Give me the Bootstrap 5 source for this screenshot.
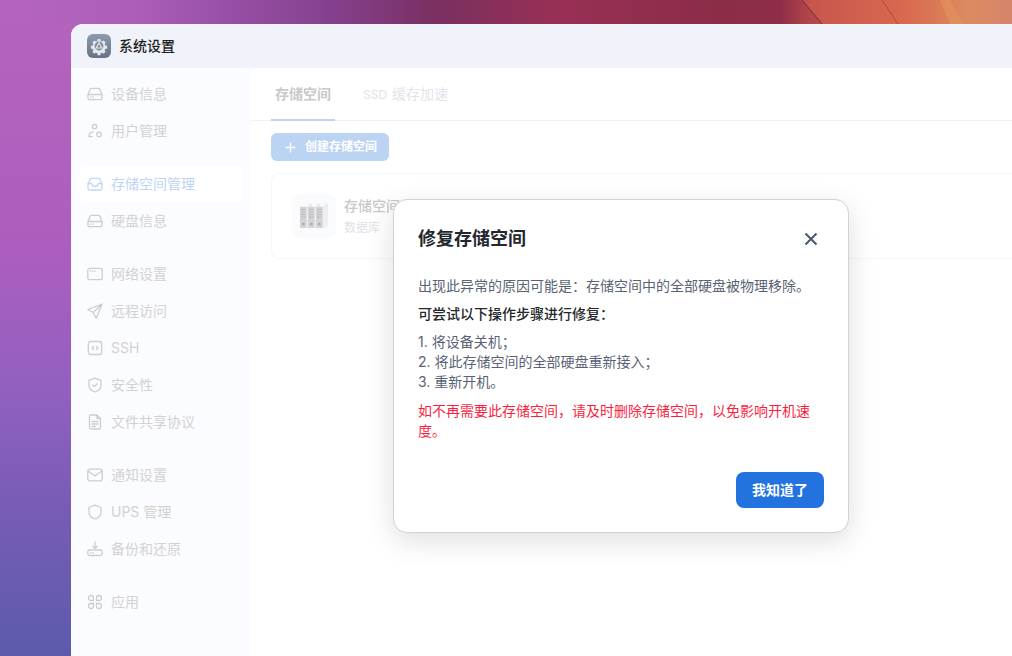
<!DOCTYPE html>
<html lang="zh-CN">
<head>
<meta charset="utf-8">
<title>系统设置</title>
<link href="https://cdn.jsdelivr.net/npm/bootstrap@5.3.0/dist/css/bootstrap.min.css" rel="stylesheet">
<style>
html,body{height:100%;overflow:hidden}
body{font-family:Inter,"Noto Sans CJK SC",sans-serif;font-size:14px;position:relative;
 background:
  linear-gradient(90deg,#b565bf 0,#ad5fb8 130px,#9a52aa 213px,#84408c 335px,#7a2f60 440px,#983055 555px,#8b2c47 723px,#8f2e47 780px,#c8564e 810px,#d8684e 903px,#dc8a60 968px,#d5866a 100%) top/100% 24px no-repeat,
  linear-gradient(180deg,#b564bd 0,#ac5ebf 250px,#9060bf 400px,#7a5cb5 500px,#5c5bab 656px)}
.wallpaper-streaks{position:absolute;left:770px;top:0;width:242px;height:24px;display:block}
.shell{position:absolute;left:71px;top:24px;width:941px;height:632px;border-top-left-radius:12px;overflow:hidden;background:#fbfcff;display:flex;flex-direction:column}
.titlebar{height:44px;background:#f0f3f9;gap:8px;padding-left:16px;flex:none}
.app-logo{width:24px;height:24px;display:block}
.app-name{font-weight:500;color:#1c1e22;line-height:20px}
.body-row{flex:1;min-height:0}
.side{width:180px;flex:none;padding:7px 8px 0;background:#fbfcff}
.side-group{margin-bottom:16px}
.side-group:first-child{margin-bottom:17px}
.side-item{height:37px;padding-left:7px;gap:7px;color:#d2d2d2;line-height:20px}
.side-item svg{width:18px;height:18px;flex:none;fill:none;stroke:#cdcdcd;stroke-width:1.3;stroke-linejoin:round;stroke-linecap:round}
.side-item.on{color:#bdd4f5;background:#fff;border-radius:8px;height:36px}
.side-item.on svg{stroke:#bfd6f6}
.pane{flex:1;background:#fff;border-top-left-radius:8px;min-width:0}
.tabbar{height:53px;border-bottom:1px solid #f0f0f0;padding-left:20px;gap:24px;align-items:stretch}
.tab-link{padding:0 4px;line-height:52px;color:#e0e3e9;height:53px}
.tab-link.on{color:#c9c9c9;font-weight:600;border-bottom:2px solid #bcd4f4}
.tab-latin{font-size:12px;margin-right:1px}
.pane-inner{padding:12px 0 0 20px}
.create-btn{height:28px;width:118px;background:#bcd4f4;border:0;border-radius:6px;color:#fff;font-size:12px;font-weight:700;gap:8px;padding:0 0 0 13px;line-height:28px}
.create-btn:disabled{background:#bcd4f4;color:#fff;opacity:1}
.create-btn svg{width:13px;height:13px;stroke:#fff;stroke-width:1.3;fill:none}
.space-card{margin-top:12px;height:86px;border:1px solid #f6f6f7;border-radius:8px 0 0 8px;border-right:0;padding:20px;gap:8px;flex-direction:row;align-items:flex-start}
.space-tile{width:44px;height:44px;background:#fafbfd;border-radius:8px;flex:none}
.space-tile svg{width:44px;height:44px;display:block}
.space-name{font-weight:500;color:#c9c9c9;line-height:24px}
.space-kind{font-size:12px;color:#dfe1e6;line-height:20px}
.dialog{position:absolute;left:393px;top:199px;width:456px;height:334px;background:#fff;border:1px solid #d2d2d2;border-radius:14px;box-shadow:0 8px 28px rgba(0,0,0,.13);padding:26px 24px 24px;z-index:5}
.dialog-title{font-size:18px;line-height:26px;font-weight:600;color:#24272c;margin:0}
.dialog-close{position:absolute;right:28px;top:31px;width:18px;height:16px;padding:0;border:0;background:none;display:block}
.dialog-close svg{display:block;width:18px;height:16px;stroke:#4b566b;stroke-width:2;fill:none}
.dialog-text{color:#5a6374;line-height:20px;margin:0}
.t1{margin-top:24px}
.t2{margin-top:8px;color:#24272c;font-weight:500}
.t3{margin-top:8px}
.t4{margin-top:9px;color:#fb1f3f}
.ok-btn{width:88px;height:36px;background:#2272e0;border:0;border-radius:8px;color:#fff;font-weight:700;font-size:14px;line-height:36px;padding:0;margin-top:31px}
.ok-btn:hover{background:#2272e0;color:#fff}
</style>
</head>
<body>
<svg class="wallpaper-streaks" viewBox="0 0 242 24" aria-hidden="true"><path d="M0 0h32l20 24H0z" fill="#8b2c47" opacity=".35"/><path d="M32 0l20 24" stroke="#7e2b35" stroke-width="1" fill="none"/><path d="M112 0l16 24" stroke="#b0483a" stroke-width="1" fill="none"/><path d="M180 0l14 24h-14l-10-24z" fill="#e3955c" opacity=".55"/></svg>
<div class="shell">
  <div class="titlebar d-flex align-items-center">
    <svg class="app-logo" viewBox="0 0 24 24"><defs><linearGradient id="lg" x1="0" y1="0" x2="0" y2="1"><stop offset="0" stop-color="#8c9cb0"/><stop offset="1" stop-color="#667283"/></linearGradient></defs><rect width="24" height="24" rx="6" fill="url(#lg)"/><path d="M10.4 4h3.2l.4 2.2 1.500.7 1.900-1.200 2.200 2.200-1.200 1.900.7 1.500 2.200.4v3.200l-2.200.4-.7 1.500 1.200 1.900-2.200 2.200-1.900-1.200-1.500.7-.4 2.200h-3.200l-.4-2.200-1.500-.7-1.900 1.200-2.200-2.200 1.200-1.900-.7-1.500-2.200-.4v-3.200l2.200-.4.7-1.500-1.200-1.900 2.200-2.200 1.900 1.200 1.500-.7z" fill="#e4e7ec" transform="translate(1.500 1.500) scale(.875)"/><circle cx="12" cy="12" r="4.400" fill="#7d8a99"/><path d="M12 8.800l2.800 5.200H9.200z" fill="none" stroke="#e4e7ec" stroke-width="1.200"/></svg>
    <span class="app-name">系统设置</span>
  </div>
  <div class="body-row d-flex">
    <nav class="side">
      <div class="side-group">
        <div class="side-item d-flex align-items-center"><svg viewBox="0 0 18 18"><path d="M2 9.500 4.200 4.200a1.500 1.500 0 0 1 1.400-.9h6.800a1.500 1.500 0 0 1 1.400.9L16 9.500v3.700a1.500 1.500 0 0 1-1.500 1.500h-11A1.500 1.500 0 0 1 2 13.200zM2 9.500h14M4.500 12.100h.6M6.800 12.100h.6"/></svg><span>设备信息</span></div>
        <div class="side-item d-flex align-items-center"><svg viewBox="0 0 18 18"><circle cx="8.500" cy="4.500" r="2.200"/><path d="M3 14.500c0-2.300 1.500-4.200 4-4.700M2.800 14.700h3.400"/><circle cx="13" cy="12.500" r="2.300"/></svg><span>用户管理</span></div>
      </div>
      <div class="side-group">
        <div class="side-item on d-flex align-items-center"><svg viewBox="0 0 18 18"><path d="M2 9 4.200 4.200a1.500 1.500 0 0 1 1.400-.9h6.800a1.500 1.500 0 0 1 1.400.9L16 9v4.500a1.500 1.500 0 0 1-1.500 1.500h-11A1.500 1.500 0 0 1 2 13.500z"/><path d="M2 8.500h3.500c.6 2 1.800 3 3.500 3s2.900-1 3.500-3H16"/></svg><span>存储空间管理</span></div>
        <div class="side-item d-flex align-items-center"><svg viewBox="0 0 18 18"><path d="M2 9.500 4.200 4.200a1.500 1.500 0 0 1 1.400-.9h6.800a1.500 1.500 0 0 1 1.400.9L16 9.500v3.700a1.500 1.500 0 0 1-1.500 1.500h-11A1.500 1.500 0 0 1 2 13.200zM2 9.500h14M4.500 12.100h.6M6.800 12.100h.6"/></svg><span>硬盘信息</span></div>
      </div>
      <div class="side-group">
        <div class="side-item d-flex align-items-center"><svg viewBox="0 0 18 18"><rect x="1.800" y="3.300" width="14.400" height="11.400" rx="2"/><path d="M4.500 6h.3M6.700 6h.3M8.900 6h.3"/></svg><span>网络设置</span></div>
        <div class="side-item d-flex align-items-center"><svg viewBox="0 0 18 18"><path d="M16 2.200 1.800 7.500l5.400 3 3 5.800zM16 2.200 7.200 10.500"/></svg><span>远程访问</span></div>
        <div class="side-item d-flex align-items-center"><svg viewBox="0 0 18 18"><rect x="2.300" y="2.500" width="13.400" height="13" rx="2.500"/><path d="M7.500 7.500 6 9l1.500 1.500M10.500 7.500 12 9l-1.500 1.500"/></svg><span>SSH</span></div>
        <div class="side-item d-flex align-items-center"><svg viewBox="0 0 18 18"><path d="M9 2.200 15 4.300v5c0 3.300-2.500 5.500-6 6.700-3.500-1.200-6-3.400-6-6.700v-5z"/><path d="m6.700 9 1.700 1.500 2.900-2.700"/></svg><span>安全性</span></div>
        <div class="side-item d-flex align-items-center"><svg viewBox="0 0 18 18"><path d="M3.500 3.500A1.500 1.500 0 0 1 5 2h6l3.500 3.500v9A1.500 1.500 0 0 1 13 16H5a1.500 1.500 0 0 1-1.500-1.500zM11 2v3.500h3.500M6 8.500h6M6 11h6M6 13.500h3.500"/></svg><span>文件共享协议</span></div>
      </div>
      <div class="side-group">
        <div class="side-item d-flex align-items-center"><svg viewBox="0 0 18 18"><rect x="1.800" y="3.200" width="14.400" height="11.600" rx="2"/><path d="m2.200 5 6.800 5 6.800-5"/></svg><span>通知设置</span></div>
        <div class="side-item d-flex align-items-center"><svg viewBox="0 0 18 18"><path d="M9 2.200 15 4.500v5c0 3.200-2.500 5.400-6 6.500-3.500-1.100-6-3.300-6-6.500v-5z"/></svg><span>UPS 管理</span></div>
        <div class="side-item d-flex align-items-center"><svg viewBox="0 0 18 18"><path d="M9 2v6.500M6.700 6.300 9 8.600l2.300-2.300"/><rect x="1.800" y="10" width="14.400" height="5.500" rx="1.800"/><path d="M4.500 12.800h.6M6.800 12.800h.6"/></svg><span>备份和还原</span></div>
      </div>
      <div class="side-group">
        <div class="side-item d-flex align-items-center"><svg viewBox="0 0 18 18"><path d="M7.500 7.500H5a2.500 2.500 0 1 1 2.500-2.500zM10.500 7.500V5A2.500 2.500 0 1 1 13 7.500zM7.500 10.500V13A2.500 2.500 0 1 1 5 10.500zM10.500 10.500H13A2.500 2.500 0 1 1 10.500 13z"/></svg><span>应用</span></div>
      </div>
    </nav>
    <main class="pane">
      <div class="tabbar d-flex">
        <div class="tab-link on">存储空间</div>
        <div class="tab-link"><span class="tab-latin">SSD</span> 缓存加速</div>
      </div>
      <div class="pane-inner">
        <button class="btn create-btn d-flex align-items-center" type="button" disabled><svg viewBox="0 0 13 13"><path d="M6.500 1.500v10M1.500 6.500h10"/></svg><span>创建存储空间</span></button>
        <div class="card space-card d-flex">
          <div class="space-tile"><svg viewBox="0 0 44 44"><g fill="#eeeef0"><path d="M14.700 12.700l3-3.500h2.500v24.800h-5.500z"/><path d="M22.700 12.700l3-3.500h2.500v24.800h-5.500z"/><path d="M30.700 12.700l3-3.500h2.300v22.800l-5.300 2.200z"/></g><g fill="#d4d4d6"><rect x="8" y="12.700" width="6.700" height="21.300" rx=".6"/><rect x="16" y="12.700" width="6.700" height="21.300" rx=".6"/><rect x="24" y="12.700" width="6.700" height="21.300" rx=".6"/></g><g stroke="#bcbcbf" stroke-width="1"><path d="M9 15.500h4.700M9 18h4.700M9 20.500h4.700M9 23h4.700M17 15.500h4.700M17 18h4.700M17 20.500h4.700M17 23h4.700M25 15.500h4.700M25 18h4.700M25 20.500h4.700M25 23h4.700"/></g><g fill="#b0b0b3"><circle cx="11.300" cy="30" r="1.500"/><circle cx="19.300" cy="30" r="1.500"/><circle cx="27.300" cy="30" r="1.500"/></g></svg></div>
          <div>
            <div class="space-name">存储空间</div>
            <div class="space-kind">数据库</div>
          </div>
        </div>
      </div>
    </main>
  </div>
</div>

<div class="dialog" role="dialog">
  <h5 class="dialog-title">修复存储空间</h5>
  <button class="dialog-close" type="button" aria-label="关闭"><svg viewBox="0 0 18 16"><path d="M3.500 2.500l11 11M14.500 2.500l-11 11"/></svg></button>
  <p class="dialog-text t1">出现此异常的原因可能是：存储空间中的全部硬盘被物理移除。</p>
  <p class="dialog-text t2">可尝试以下操作步骤进行修复：</p>
  <p class="dialog-text t3">1. 将设备关机；<br>2. 将此存储空间的全部硬盘重新接入；<br>3. 重新开机。</p>
  <p class="dialog-text t4">如不再需要此存储空间，请及时删除存储空间，以免影响开机速度。</p>
  <div class="d-flex justify-content-end"><button class="btn ok-btn" type="button">我知道了</button></div>
</div>
</body>
</html>
